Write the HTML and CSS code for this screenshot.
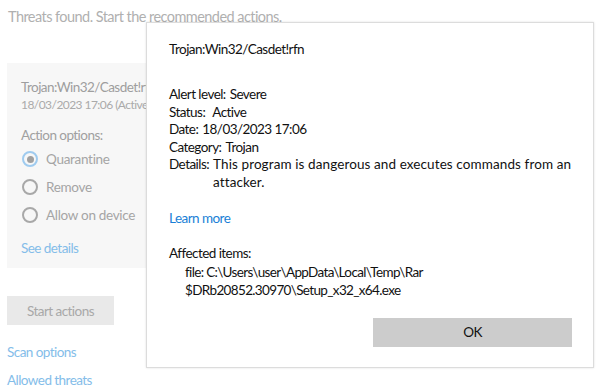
FILE: index.html
```html
<!DOCTYPE html>
<html>
<head>
<meta charset="utf-8">
<link rel="stylesheet" href="styles.css">
</head>
<body>
<div class="page">
  <div class="heading">Threats found. Start the recommended actions.</div>
  <div class="card">
    <div class="threat-name">Trojan:Win32/Casdet!rfn</div>
    <div class="threat-date">18/03/2023 17:06 (Active)</div>
    <div class="options-label">Action options:</div>
    <div class="radio-list">
      <div class="radio-row"><span class="radio checked"></span><span>Quarantine</span></div>
      <div class="radio-row"><span class="radio"></span><span>Remove</span></div>
      <div class="radio-row"><span class="radio"></span><span>Allow on device</span></div>
    </div>
    <div class="link see-details">See details</div>
  </div>
  <div class="start-btn">Start actions</div>
  <div class="link bottom-link">Scan options</div>
  <div class="link bottom-link">Allowed threats</div>
</div>

<div class="dialog">
  <div class="dlg-title">Trojan:Win32/Casdet!rfn</div>
  <div class="dlg-info">
    <div class="row"><span>Alert level:</span><span>Severe</span></div>
    <div class="row"><span>Status:</span><span class="wide">Active</span></div>
    <div class="row"><span>Date:</span><span>18/03/2023 17:06</span></div>
    <div class="row"><span>Category:</span><span>Trojan</span></div>
    <div class="row details"><span>Details:</span><span class="details-text">This program is dangerous and executes commands from an attacker.</span></div>
  </div>
  <div class="learn">Learn more</div>
  <div class="affected">Affected items:</div>
  <div class="file">file: C:\Users\user\AppData\Local\Temp\Rar<br>$DRb20852.30970\Setup_x32_x64.exe</div>
  <div class="btn-row"><div class="ok-btn">OK</div></div>
</div>
</body>
</html>
```
FILE: styles.css
```css
html, body {
  margin: 0;
  padding: 0;
  background: #ffffff;
}
body {
  width: 600px;
  height: 389px;
  overflow: hidden;
  position: relative;
  font-family: Lato, "Noto Sans", sans-serif;
  letter-spacing: -0.55px;
}
.page {
  padding: 6px 0 0 7px;
  color: #a3a3a3;
}
.heading {
  font-size: 14.5px;
  line-height: 22px;
  color: #b0b0b0;
  padding-left: 1px;
}
.card {
  margin-top: 35px;
  width: 200px;
  height: 205px;
  box-sizing: border-box;
  background: #f7f7f7;
  padding: 15px 0 0 14px;
}
.threat-name {
  font-size: 13.5px;
  line-height: 18px;
  color: #9e9e9e;
}
.threat-date {
  font-size: 12px;
  line-height: 16px;
  color: #aaaaaa;
  margin-top: 1px;
}
.options-label {
  margin-top: 13px;
  font-size: 13.5px;
  line-height: 18px;
  color: #a0a0a0;
}
.radio-list {
  display: flex;
  flex-direction: column;
  gap: 10px;
  margin-top: 6px;
}
.radio-row {
  display: flex;
  align-items: center;
  gap: 8px;
  font-size: 13.5px;
  line-height: 18px;
  color: #a5a5a5;
  letter-spacing: -0.3px;
}
.radio {
  width: 12px;
  height: 12px;
  border: 2px solid #a8a8a8;
  border-radius: 50%;
  box-sizing: content-box;
  display: flex;
  align-items: center;
  justify-content: center;
  margin-left: 1px;
}
.radio.checked {
  border-color: #9fcbef;
}
.radio.checked::after {
  content: "";
  width: 7px;
  height: 7px;
  border-radius: 50%;
  background: #a0a0a0;
}
.link {
  color: #84bde9;
  font-size: 13.5px;
  line-height: 18px;
}
.see-details {
  margin-top: 15px;
}
.start-btn {
  margin-top: 28px;
  width: 107px;
  height: 29px;
  background: #e9e9e9;
  color: #a8a8a8;
  font-size: 13.5px;
  display: flex;
  align-items: center;
  justify-content: center;
}
.bottom-link {
  margin-top: 18px;
  line-height: 18px;
}
.bottom-link + .bottom-link {
  margin-top: 10px;
}

.dialog {
  position: absolute;
  left: 146px;
  top: 22px;
  width: 448px;
  height: 346px;
  box-sizing: border-box;
  background: #ffffff;
  border: 1px solid #dcdcdc;
  box-shadow: 0 0 2px rgba(0,0,0,0.12);
  padding: 17px 21px 0 22px;
  color: #111111;
  font-size: 13.5px;
  line-height: 17.6px;
}
.dlg-title {
  line-height: 18px;
}
.dlg-info {
  margin-top: 28px;
}
.row {
  display: flex;
  gap: 4px;
}
.row .wide {
  margin-left: 3px;
}
.details-text {
  flex: 1;
  letter-spacing: 0.1px;
}
.learn {
  margin-top: 18px;
  color: #1a7fd6;
}
.affected {
  margin-top: 17.4px;
}
.file {
  margin-top: 2px;
  padding-left: 16px;
  letter-spacing: -0.65px;
}
.btn-row {
  display: flex;
  justify-content: flex-end;
  margin-top: 19px;
}
.ok-btn {
  width: 199px;
  height: 29px;
  background: #cccccc;
  display: flex;
  align-items: center;
  justify-content: center;
  color: #111111;
}
```
